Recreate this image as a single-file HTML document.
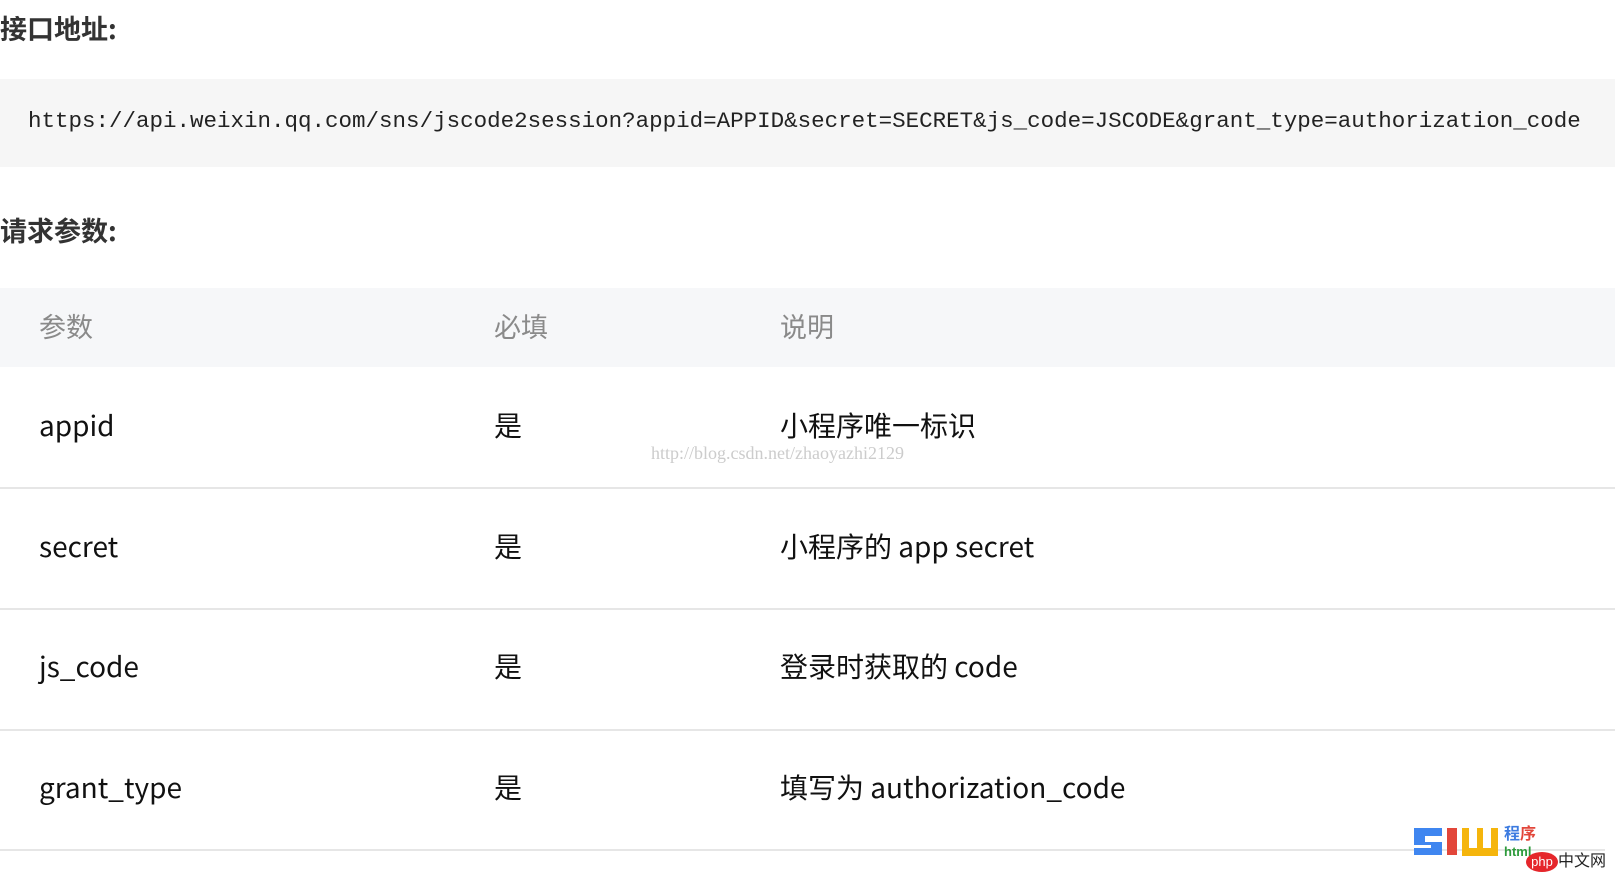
<!DOCTYPE html>
<html><head><meta charset="utf-8"><style>
body{margin:0;width:1618px;height:878px;overflow:hidden;background:#fff;font-family:"Liberation Sans","Noto Sans CJK SC",sans-serif;position:relative}
.a{position:absolute;white-space:nowrap;line-height:1}
h2{position:absolute;margin:0;left:0;font-size:27px;font-weight:bold;color:#333;line-height:1;font-family:"Noto Sans CJK SC",sans-serif}
.code{position:absolute;left:0;top:79px;width:1615px;height:88px;background:#f6f6f6}
.code span{position:absolute;left:28px;top:31px;white-space:nowrap;font-family:"Liberation Mono",monospace;font-size:22.5px;line-height:1;color:#222}
.th{position:absolute;left:0;top:288px;width:1615px;height:79px;background:#f6f7f9}
.hd{font-size:27px;color:#8a8a8a;font-family:"Noto Sans CJK SC",sans-serif}
.line{position:absolute;left:0;width:1615px;height:2px;background:#e6e6e6}
.c{font-size:28px;color:#111;font-family:"Noto Sans CJK SC",sans-serif}
</style></head><body>
<h2 style="top:14px">接口地址:</h2>
<div class="code"><span>https://api.weixin.qq.com/sns/jscode2session?appid=APPID&amp;secret=SECRET&amp;js_code=JSCODE&amp;grant_type=authorization_code</span></div>
<h2 style="top:216px">请求参数:</h2>
<div class="th"></div>
<div class="a hd" style="left:39px;top:312px">参数</div>
<div class="a hd" style="left:494px;top:312px">必填</div>
<div class="a hd" style="left:780px;top:312px">说明</div>

<div class="a c" style="left:39px;top:411px">appid</div>
<div class="a c" style="left:494px;top:411px">是</div>
<div class="a c" style="left:780px;top:411px">小程序唯一标识</div>
<div class="a" style="left:651px;top:444px;font-family:'Liberation Serif',serif;font-size:18px;color:#ccc">http://blog.csdn.net/zhaoyazhi2129</div>
<div class="line" style="top:487px"></div>

<div class="a c" style="left:39px;top:532px">secret</div>
<div class="a c" style="left:494px;top:532px">是</div>
<div class="a c" style="left:780px;top:532px">小程序的 app secret</div>
<div class="line" style="top:608px"></div>

<div class="a c" style="left:39px;top:652px">js_code</div>
<div class="a c" style="left:494px;top:652px">是</div>
<div class="a c" style="left:780px;top:652px">登录时获取的 code</div>
<div class="line" style="top:729px"></div>

<div class="a c" style="left:39px;top:773px">grant_type</div>
<div class="a c" style="left:494px;top:773px">是</div>
<div class="a c" style="left:780px;top:773px">填写为 authorization_code</div>
<div class="line" style="top:849px;width:1605px"></div>

<div class="a" style="left:1414px;top:828px;width:28px;height:27px;background:#3f86f0"></div>
<div class="a" style="left:1425px;top:836px;width:17px;height:6px;background:#fff"></div>
<div class="a" style="left:1414px;top:845px;width:17px;height:3px;background:#fff"></div>
<div class="a" style="left:1447px;top:828px;width:10px;height:27px;background:#e2463a"></div>
<div class="a" style="left:1462px;top:828px;width:36px;height:28px;background:#f5b50c"></div>
<div class="a" style="left:1469px;top:828px;width:8px;height:20px;background:#fff"></div>
<div class="a" style="left:1483px;top:828px;width:8px;height:20px;background:#fff"></div>
<div class="a" style="left:1504px;top:827px;font-size:16px;font-weight:bold;color:#3c7be0">程<span style="color:#e2463a">序</span></div>
<div class="a" style="left:1504px;top:845px;font-size:13px;font-weight:bold;color:#2e9b3c">html</div>
<div class="a" style="left:1526px;top:852px;width:32px;height:20px;border-radius:50%;background:#e5262b;color:#fff;font-size:13px;text-align:center;line-height:19px">php</div>
<div class="a" style="left:1558px;top:854px;font-size:16px;color:#222">中文网</div>
</body></html>
